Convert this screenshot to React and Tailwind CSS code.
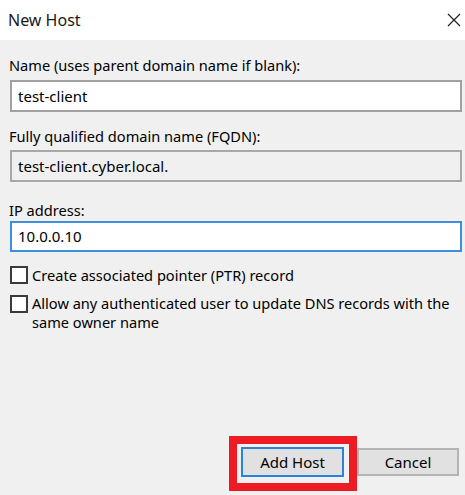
import React from "react";

function Checkbox() {
  return <div className="w-[18px] h-[18px] shrink-0 border-2 border-[#3a3a3a] bg-white" />;
}

export default function App() {
  const font = { fontFamily: '"Noto Sans", "Open Sans", sans-serif' };
  return (
    <div className="w-[465px] h-[495px] bg-[#f0f0f0] flex flex-col text-[#000] overflow-hidden" style={font}>
      <div className="h-[40px] bg-white flex items-center justify-between pl-[8px] pr-[3px] shrink-0">
        <span className="text-[16px] leading-none text-[#1a1a1a] -mt-[1px]">New Host</span>
        <svg width="14" height="14" viewBox="0 0 14 14" className="mr-[1px] -mt-[1px]">
          <path d="M1 1 L13 13 M13 1 L1 13" stroke="#222" strokeWidth="1.2" fill="none" />
        </svg>
      </div>
      <div className="flex flex-col flex-1 pl-[10px] pr-[3px] text-[14.6px]">
        <div className="mt-[15px] h-[20px] leading-[20px] -ml-[1px]">Name (uses parent domain name if blank):</div>
        <div className="mt-[5px] h-[32px] border-2 border-[#a0a0a0] bg-white flex items-center pl-[6px] text-[15px]">test-client</div>
        <div className="mt-[14px] h-[20px] leading-[20px] -ml-[1px]">Fully qualified domain name (FQDN):</div>
        <div className="mt-[4px] h-[32px] border-2 border-[#a8a8a8] bg-[#f0f0f0] flex items-center pl-[6px] text-[15px]">test-client.cyber.local.</div>
        <div className="mt-[18px] h-[20px] leading-[20px] -ml-[1px]">IP address:</div>
        <div className="mt-[1px] h-[31px] border-2 border-[#3c8fdc] bg-white flex items-center pl-[6px] text-[15px]">10.0.0.10</div>
        <div className="mt-[14px] flex items-center gap-[4px] h-[18px]">
          <Checkbox />
          <span className="leading-[19px]">Create associated pointer (PTR) record</span>
        </div>
        <div className="mt-[11px] flex items-start gap-[4px]">
          <Checkbox />
          <span className="leading-[19px] -mt-[1px]">Allow any authenticated user to update DNS records with the same owner name</span>
        </div>
        <div className="mt-auto mb-[18px] flex justify-end gap-[13px] pr-[3px]">
          <div className="relative">
            <div className="absolute left-[-12px] top-[-11px] w-[128px] h-[55px] border-[8px] border-[#ed1c24]" />
            <button className="relative w-[103px] h-[30px] bg-[#e1e1e1] border-2 border-[#2b82d9] text-[15px]" style={font}>Add Host</button>
          </div>
          <button className="w-[102px] h-[28px] mt-[1px] bg-[#e1e1e1] border-2 border-[#b4b4b4] text-[15px]" style={font}>Cancel</button>
        </div>
      </div>
    </div>
  );
}
